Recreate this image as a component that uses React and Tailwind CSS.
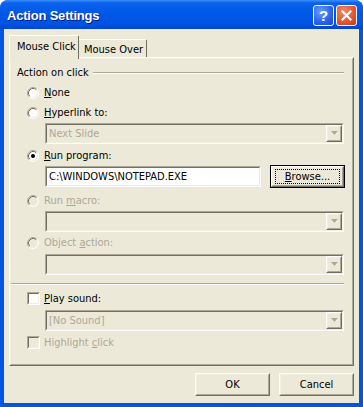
import React from "react";

const ui = "font-['DejaVu_Sans_Condensed','Liberation_Sans',Arial,sans-serif] text-[11px] leading-[13px]";

const Radio = ({ checked, disabled }) => (
  <svg width="12" height="12" viewBox="0 0 12 12" className="shrink-0">
    <circle cx="6" cy="6" r="4.5" fill={disabled ? "#ECE9D8" : "#FFFFFF"} />
    <path d="M2.11 9.89 A5.5 5.5 0 0 1 9.89 2.11" stroke="#ACA899" fill="none" />
    <path d="M9.89 2.11 A5.5 5.5 0 0 1 2.11 9.89" stroke="#FFFFFF" fill="none" />
    <path d="M2.82 9.18 A4.5 4.5 0 0 1 9.18 2.82" stroke="#716F64" fill="none" />
    <path d="M9.18 2.82 A4.5 4.5 0 0 1 2.82 9.18" stroke="#F1EFE2" fill="none" />
    {checked && <circle cx="6" cy="6" r="2" fill="#000000" />}
  </svg>
);

const Sunken = ({ className, children, inner = "bg-white" }) => (
  <div className={`border border-t-[#ACA899] border-l-[#ACA899] border-b-white border-r-white ${className}`}>
    <div className={`h-full border border-t-[#716F64] border-l-[#716F64] border-b-[#F1EFE2] border-r-[#F1EFE2] ${inner}`}>
      {children}
    </div>
  </div>
);

const Checkbox = ({ disabled }) => (
  <Sunken className="h-[13px] w-[13px] shrink-0" inner={disabled ? "bg-[#ECE9D8]" : "bg-white"} />
);

const Raised = ({ className, children }) => (
  <div className={`border border-t-white border-l-white border-b-[#716F64] border-r-[#716F64] ${className}`}>
    <div className="flex h-full items-center justify-center border border-t-[#F1EFE2] border-l-[#F1EFE2] border-b-[#ACA899] border-r-[#ACA899] bg-[#ECE9D8]">
      {children}
    </div>
  </div>
);

const Combo = ({ text }) => (
  <Sunken className="ml-[34px] mr-[8px] h-[21px]" inner="bg-[#ECE9D8] flex items-center">
    <span className="flex-1 pl-[2px] text-[#ACA899]">{text}</span>
    <Raised className="h-[17px] w-[16px]">
      <svg width="7" height="5" viewBox="0 0 7 5">
        <path d="M1 1 L4 4 L7 1 Z" fill="#FFFFFF" />
        <path d="M0 0 L7 0 L3.5 4 Z" fill="#ACA899" />
      </svg>
    </Raised>
  </Sunken>
);

const Option = ({ label, checked, disabled, className }) => (
  <div className={`flex h-[13px] items-center pl-[16px] ${className}`}>
    <Radio checked={checked} disabled={disabled} />
    <span className={`ml-[5px] ${disabled ? "text-[#ACA899]" : "text-black"}`}>{label}</span>
  </div>
);

export default function App() {
  return (
    <div className={`${ui} flex h-[407px] w-[363px] flex-col overflow-hidden rounded-t-[8px] bg-[#0055E5]`}>
      {/* title bar */}
      <div className="flex h-[29px] shrink-0 items-start justify-between bg-[linear-gradient(to_bottom,#3C8FF9_0%,#0A62EE_10%,#0058E8_45%,#0053E2_85%,#0044CC_100%)] pl-[7px] pr-[6px] pt-[5px]">
        <span className="mt-[4px] font-['Liberation_Sans',Arial,sans-serif] text-[13px] font-bold leading-[13px] tracking-[-0.2px] text-white [text-shadow:1px_1px_0_#0A1883]">
          Action Settings
        </span>
        <div className="flex gap-[2px]">
          <div className="flex h-[21px] w-[21px] items-center justify-center rounded-[3px] border border-white bg-[radial-gradient(circle_at_35%_30%,#6A9CF8,#2A62EC_60%,#1947D6)] font-['Liberation_Sans',Arial,sans-serif] text-[15px] font-bold leading-none text-white">
            ?
          </div>
          <div className="flex h-[21px] w-[21px] items-center justify-center rounded-[3px] border border-white bg-[radial-gradient(circle_at_35%_30%,#F08A6A,#E0552F_60%,#C03A15)]">
            <svg width="11" height="11" viewBox="0 0 11 11">
              <path d="M1.5 1.5 L9.5 9.5 M9.5 1.5 L1.5 9.5" stroke="#FFFFFF" strokeWidth="2" strokeLinecap="square" />
            </svg>
          </div>
        </div>
      </div>

      {/* body */}
      <div className="mx-[4px] mb-[4px] flex flex-1 flex-col bg-[#ECE9D8] pt-[6px]">
        {/* tabs */}
        <div className="ml-[5px] flex h-[22px] items-end">
          <div className="relative z-10 -mb-[2px] h-[24px] w-[70px] rounded-tl-[2px] rounded-tr-[2px] border-l border-t border-r border-l-white border-t-white border-r-[#716F64] bg-[#ECE9D8] pl-[7px] pt-[4px] text-black">
            Mouse Click
          </div>
          <div className="h-[18px] w-[68px] rounded-tr-[2px] border-t border-r border-t-white border-r-[#716F64] pl-[5px] pt-[3px] text-black">
            Mouse Over
          </div>
        </div>

        {/* panel */}
        <div className="mx-[5px] h-[309px] border border-t-white border-l-white border-b-[#716F64] border-r-[#716F64]">
          <div className="flex h-full flex-col border border-t-[#F1EFE2] border-l-[#F1EFE2] border-b-[#ACA899] border-r-[#ACA899]">
            <div className="mt-[7px] mr-[8px] flex h-[13px] items-center pl-[6px]">
              <span className="text-black">Action on click</span>
              <div className="ml-[4px] flex-1 border-t border-b border-t-[#ACA899] border-b-white" />
            </div>

            <Option className="mt-[7px]" label={<><u>N</u>one</>} />
            <Option className="mt-[7px]" label={<><u>H</u>yperlink to:</>} />
            <div className="mt-[4px]">
              <Combo text="Next Slide" />
            </div>
            <Option className="mt-[5px]" checked label={<><u>R</u>un program:</>} />
            <div className="mt-[3px] ml-[34px] flex h-[23px] items-center">
              <Sunken className="h-[21px] w-[216px]" inner="bg-white flex items-center">
                <span className="pl-[2px] text-black">C:\WINDOWS\NOTEPAD.EXE</span>
              </Sunken>
              <div className="ml-[9px] h-[23px] w-[75px] border border-black">
                <Raised className="h-full w-full">
                  <div className="flex h-[15px] w-[65px] items-center justify-center border border-dotted border-black text-black">
                    <span><u>B</u>rowse...</span>
                  </div>
                </Raised>
              </div>
            </div>
            <Option className="mt-[6px]" disabled label={<>Run <u>m</u>acro:</>} />
            <div className="mt-[4px]">
              <Combo text="" />
            </div>
            <Option className="mt-[4px]" disabled label={<>Object <u>a</u>ction:</>} />
            <div className="mt-[5px]">
              <Combo text="" />
            </div>

            <div className="mt-[8px] mr-[8px] border-t border-b border-t-[#ACA899] border-b-white" />

            <div className="mt-[7px] flex h-[13px] items-center pl-[16px]">
              <Checkbox />
              <span className="ml-[4px] text-black"><u>P</u>lay sound:</span>
            </div>
            <div className="mt-[5px]">
              <Combo text="[No Sound]" />
            </div>
            <div className="mt-[5px] flex h-[13px] items-center pl-[16px]">
              <Checkbox disabled />
              <span className="ml-[4px] text-[#ACA899]">Highlight <u>c</u>lick</span>
            </div>
          </div>
        </div>

        {/* buttons */}
        <div className="mt-[7px] mr-[5px] flex justify-end gap-[9px]">
          <Raised className="h-[23px] w-[75px]">
            <span className="text-black">OK</span>
          </Raised>
          <Raised className="h-[23px] w-[75px]">
            <span className="text-black">Cancel</span>
          </Raised>
        </div>
      </div>
    </div>
  );
}
